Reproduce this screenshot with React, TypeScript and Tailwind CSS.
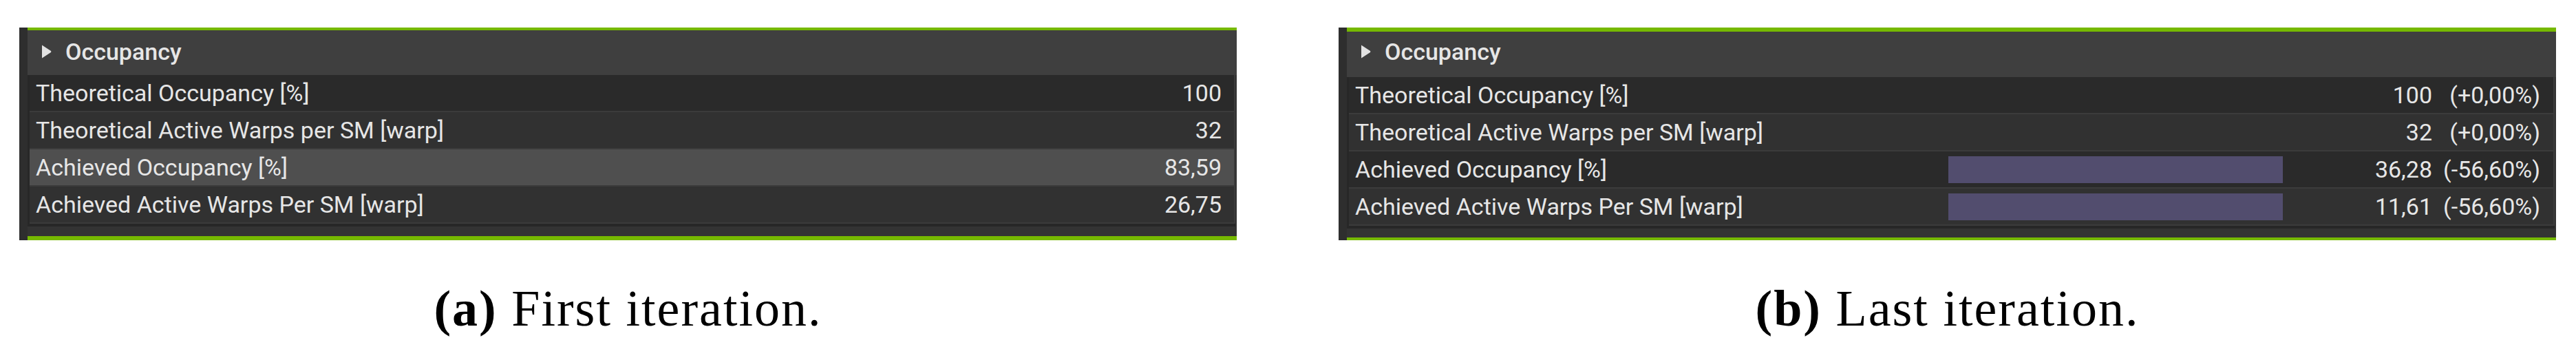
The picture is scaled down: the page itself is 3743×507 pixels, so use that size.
import React from "react";

type Row = { label: string; value: string; delta?: string; bar?: boolean; bg: string };

const leftRows: Row[] = [
  { label: "Theoretical Occupancy [%]", value: "100", bg: "bg-[#2a2a2a]" },
  { label: "Theoretical Active Warps per SM [warp]", value: "32", bg: "bg-[#313131]" },
  { label: "Achieved Occupancy [%]", value: "83,59", bg: "bg-[#4f4f4f]" },
  { label: "Achieved Active Warps Per SM [warp]", value: "26,75", bg: "bg-[#313131]" },
];

const rightRows: Row[] = [
  { label: "Theoretical Occupancy [%]", value: "100", delta: "(+0,00%)", bg: "bg-[#2a2a2a]" },
  { label: "Theoretical Active Warps per SM [warp]", value: "32", delta: "(+0,00%)", bg: "bg-[#313131]" },
  { label: "Achieved Occupancy [%]", value: "36,28", delta: "(-56,60%)", bar: true, bg: "bg-[#2a2a2a]" },
  { label: "Achieved Active Warps Per SM [warp]", value: "11,61", delta: "(-56,60%)", bar: true, bg: "bg-[#313131]" },
];

function Triangle() {
  return (
    <svg width="15" height="22" viewBox="0 0 15 22" className="shrink-0">
      <path d="M1 1.5 L14 10 Q14.8 11 14 12 L1 20.5 Z" fill="#e2e2e2" />
    </svg>
  );
}

function Panel({
  rows,
  withDelta,
  topGreen,
  bottomGreen,
  headerH,
}: {
  rows: Row[];
  withDelta: boolean;
  topGreen: string;
  bottomGreen: string;
  headerH: string;
}) {
  return (
    <div className="flex w-[1769px] h-[309px] font-['Roboto',sans-serif] text-[#e6e6e6]">
      <div className="w-[12px] bg-[#2e2e2e]" />
      <div className="flex-1 flex flex-col bg-[#333333]">
        <div className={topGreen} />
        <div className={headerH}>
          <div className="flex items-center gap-[20px] pl-[20px] h-[34px]">
            <Triangle />
            <span className="text-[34px] leading-none font-medium">Occupancy</span>
          </div>
        </div>
        <div className="bg-[#272727] pl-[3px] pb-[4px] mr-[2px]">
          {rows.map((r) => (
            <div
              key={r.label}
              className={`flex items-center h-[54px] border-b-2 border-r-2 border-[#3b3b3b] ${r.bg}`}
            >
              <div className="flex-1 pl-[9px] text-[34px] leading-none whitespace-nowrap">{r.label}</div>
              {withDelta ? (
                <>
                  <div className="w-[486px] h-[39px]">
                    {r.bar ? <div className="w-full h-full bg-[#524d6e]" /> : null}
                  </div>
                  <div className="w-[217px] text-right text-[34px] leading-none">{r.value}</div>
                  <div className="w-[157px] text-right text-[34px] leading-none">{r.delta}</div>
                  <div className="w-[19px]" />
                </>
              ) : (
                <>
                  <div className="w-[300px] text-right text-[34px] leading-none">{r.value}</div>
                  <div className="w-[18px]" />
                </>
              )}
            </div>
          ))}
        </div>
        <div className="flex-1" />
        <div className={bottomGreen} />
      </div>
    </div>
  );
}

export default function App() {
  return (
    <div className="w-[3743px] h-[507px] bg-white pt-[40px] overflow-hidden">
      <div className="flex pl-[28px] gap-[148px]">
        <Panel
          rows={leftRows}
          withDelta={false}
          topGreen="h-[4px] bg-[#76b900]"
          bottomGreen="h-[6px] bg-[#76b900]"
          headerH="h-[65px] bg-[#3f3f3f] pt-[14px]"
        />
        <Panel
          rows={rightRows}
          withDelta={true}
          topGreen="h-[6px] bg-[#76b900]"
          bottomGreen="h-[4px] bg-[#76b900]"
          headerH="h-[66px] bg-[#3f3f3f] pt-[12px]"
        />
      </div>
      <div className="flex pl-[28px] gap-[148px] mt-[62px] font-['Liberation_Serif',serif] text-black text-[74px] leading-[74px] tracking-[2px]">
        <div className="w-[1769px] text-center whitespace-nowrap">
          <span className="font-bold">(a)</span> First iteration.
        </div>
        <div className="w-[1769px] text-center whitespace-nowrap">
          <span className="font-bold">(b)</span> Last iteration.
        </div>
      </div>
    </div>
  );
}
